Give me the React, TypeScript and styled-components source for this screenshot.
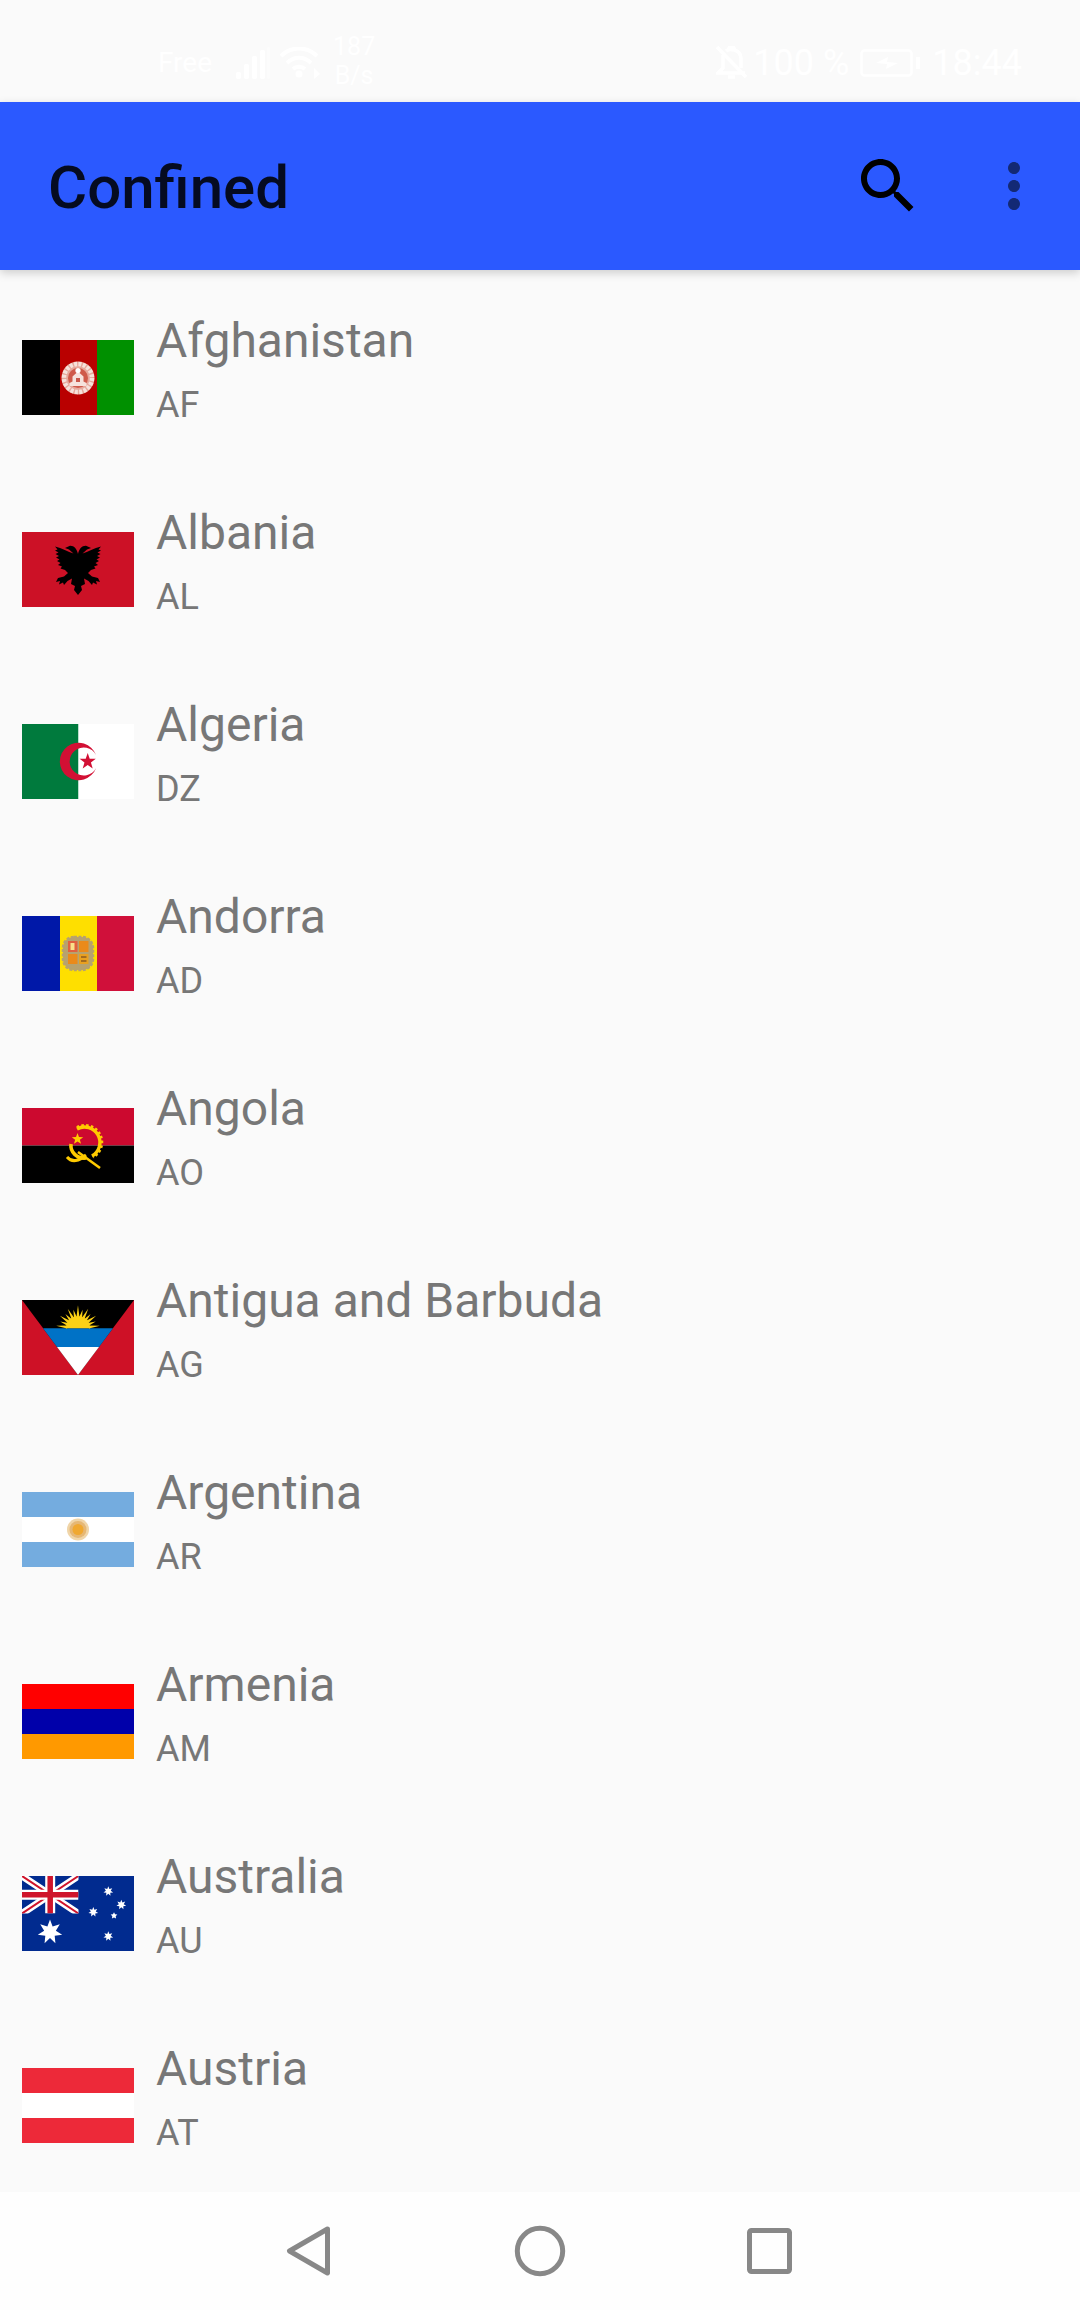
import * as React from "react";
import styled, { createGlobalStyle } from "styled-components";

const GlobalStyle = createGlobalStyle`
  html, body {
    margin: 0;
    padding: 0;
    background: #fafafa;
    font-family: Roboto, "Liberation Sans", sans-serif;
  }
`;

const Screen = styled.div`
  display: flex;
  flex-direction: column;
  width: 1080px;
  height: 2310px;
  overflow: hidden;
  background: #fafafa;
`;

const StatusBar = styled.div`
  display: flex;
  justify-content: space-between;
  align-items: center;
  height: 102px;
  box-sizing: border-box;
  padding: 24px 58px 0 158px;
  color: #fff;
  flex-shrink: 0;
`;

const StatusGroup = styled.div`
  display: flex;
  align-items: center;
`;

const Carrier = styled.span`
  font-size: 28px;
  line-height: 32px;
  margin-right: 24px;
`;

const NetSpeed = styled.div`
  display: flex;
  flex-direction: column;
  align-items: center;
  margin-left: 13px;
  font-size: 25px;
  line-height: 29px;
  margin-top: -4px;
`;

const StatusText = styled.span`
  font-size: 36px;
  line-height: 42px;
  white-space: pre;
`;

const StatusIcon = styled.svg<{ $left?: number; $right?: number }>`
  display: block;
  flex-shrink: 0;
  margin-left: ${props => props.$left || 0}px;
  margin-right: ${props => props.$right || 0}px;
`;

const AppBar = styled.header`
  position: relative;
  display: flex;
  align-items: center;
  height: 168px;
  flex-shrink: 0;
  padding: 0 12px 0 48px;
  background: #2b59ff;
  box-shadow: 0 3px 9px rgba(0, 0, 0, 0.18);
`;

const Title = styled.h1`
  flex: 1;
  margin: 2px 0 0;
  font-size: 60px;
  font-weight: 500;
  color: rgba(0, 0, 0, 0.87);
`;

const ActionIcon = styled.svg<{ $faded?: boolean }>`
  display: block;
  width: 72px;
  height: 72px;
  fill: ${props => (props.$faded ? "rgba(0, 0, 0, 0.54)" : "#000")};
`;

const SearchButton = styled.div`
  padding: 36px;
`;

const MenuButton = styled.div`
  padding: 36px 18px;
`;

const CountryList = styled.ul`
  flex: 1;
  min-height: 0;
  overflow: hidden;
  list-style: none;
  margin: 0;
  padding: 12px 0 0;
`;

const CountryRow = styled.li`
  display: flex;
  align-items: flex-start;
  height: 192px;
  box-sizing: border-box;
  padding: 31px 0 0 22px;
`;

const FlagImage = styled.svg`
  display: block;
  width: 112px;
  height: 75px;
  margin-top: 27px;
  margin-right: 22px;
  flex-shrink: 0;
`;

const CountryName = styled.div`
  font-size: 48px;
  line-height: 56px;
  color: #777;
`;

const CountryCode = styled.div`
  margin-top: 15px;
  font-size: 36px;
  line-height: 42px;
  color: #777;
`;

const NavBar = styled.nav`
  display: flex;
  justify-content: center;
  align-items: center;
  gap: 170px;
  height: 118px;
  flex-shrink: 0;
  background: #fefefe;
`;

const NavIcon = styled.svg`
  display: block;
  width: 60px;
  height: 60px;
  fill: none;
  stroke: #888;
  stroke-width: 5;
  stroke-linejoin: round;
`;

function starPoints(cx: number, cy: number, outer: number, inner: number, n: number) {
  const pts: string[] = [];
  for (let i = 0; i < n * 2; i++) {
    const r = i % 2 === 0 ? outer : inner;
    const a = (Math.PI * i) / n - Math.PI / 2;
    pts.push(`${(cx + r * Math.cos(a)).toFixed(2)},${(cy + r * Math.sin(a)).toFixed(2)}`);
  }
  return pts.join(" ");
}

const Afghanistan = () => (
  <>
    <rect width="38" height="75" fill="#000" />
    <rect x="38" width="37" height="75" fill="#b90000" />
    <rect x="75" width="37" height="75" fill="#009000" />
    <circle cx="56" cy="38" r="16.5" fill="#e6a89c" />
    <circle cx="56" cy="38" r="14" fill="none" stroke="#f6e2dc" strokeWidth="4.5" strokeDasharray="3 1.4" />
    <circle cx="56" cy="38" r="10" fill="#cf5a4a" />
    <path d="M47.5 46h17v-3l-3-1.5v-5l-5.5-5-5.5 5v5l-3 1.5z" fill="#f6e2dc" />
    <circle cx="56" cy="30.5" r="2.6" fill="#fff" />
    <rect x="54" y="38" width="4" height="4" fill="#c9574a" />
  </>
);

const EAGLE =
  "M56 22C57 17 60 13.5 64 13.7L69 16 65 17.5 60.5 21.5C66 20 72 16 79 14.5L76.5 17.5 79 18.5 75.5 20.5 78.5 22 75 24 78 25.5 74.5 27.5 77 29 73.5 31 76 33 72 34.5 73.5 36.5 69 38 66 41 70 44.5 76 46 78 50 74 49 75 52.5 71 50.5 70 53 66.5 49 62 46.5 63 52 59 54 60 58 56 63Z";

const Albania = () => (
  <>
    <rect width="112" height="75" fill="#cc1126" />
    <path d={EAGLE} fill="#000" />
    <path d={EAGLE} fill="#000" transform="translate(112 0) scale(-1 1)" />
  </>
);

const Algeria = () => (
  <>
    <rect width="56.5" height="75" fill="#007a3d" />
    <rect x="56.5" width="55.5" height="75" fill="#fff" />
    <path d="M74.1 31.1A18.7 18.7 0 1 0 74.1 43.9A14 14 0 1 1 74.1 31.1Z" fill="#d21034" />
    <polygon points={starPoints(65.7, 37.5, 8.5, 3.4, 5)} fill="#d21034" />
  </>
);

const Andorra = () => (
  <>
    <rect width="38" height="75" fill="#0018a8" />
    <rect x="38" width="37" height="75" fill="#fedf00" />
    <rect x="75" width="37" height="75" fill="#d0103a" />
    <rect x="41" y="21" width="30" height="33" rx="11" fill="#b7a26e" stroke="#b7a26e" strokeWidth="2.5" strokeDasharray="3 1.5" />
    <rect x="46" y="25" width="9.5" height="11" fill="#e0603f" />
    <rect x="48.5" y="27" width="4" height="7" fill="#fbe08a" />
    <rect x="57" y="25" width="9.5" height="11" fill="#ea8a1a" />
    <rect x="46" y="38" width="9.5" height="10" fill="#ea8a1a" />
    <rect x="57" y="38" width="9.5" height="10" fill="#e8a020" />
    <path d="M59 41h5.5M59 45h5.5" stroke="#8a5a20" strokeWidth="1.5" />
  </>
);

const Angola = () => (
  <>
    <rect width="112" height="37.5" fill="#cc092f" />
    <rect y="37.5" width="112" height="37.5" fill="#000" />
    <path d="M55 21A15 15 0 0 1 70 48" fill="none" stroke="#ffcb00" strokeWidth="3.4" />
    <path d="M55 19.5A16.5 16.5 0 0 1 71 49" fill="none" stroke="#ffcb00" strokeWidth="3" strokeDasharray="2.5 2.2" />
    <polygon points={starPoints(55.5, 31, 6, 2.5, 5)} fill="#ffcb00" />
    <path d="M49 36C48 44 55 51 64 50" fill="none" stroke="#ffcb00" strokeWidth="3.6" />
    <path d="M56 44L78 60" fill="none" stroke="#ffcb00" strokeWidth="2.6" />
    <path d="M45 49C50 55 57 53 64 47" fill="none" stroke="#ffcb00" strokeWidth="3" />
  </>
);

const Antigua = () => (
  <>
    <rect width="112" height="75" fill="#ce1126" />
    <polygon points="0,0 112,0 56,75" fill="#000" />
    <polygon points="21,28.3 91,28.3 77,47 35,47" fill="#0072c6" />
    <polygon points="35,47 77,47 56,75" fill="#fff" />
    {Array.from({ length: 13 }, (_, i) => {
      const a = (Math.PI * (i + 0.5)) / 13;
      const len = i === 6 ? 23 : i % 2 === 0 ? 22 : 19;
      const x = 56 - Math.cos(a) * len;
      const y = 28.3 - Math.sin(a) * len;
      const s = 0.14;
      const x1 = 56 - Math.cos(a - s) * 11;
      const y1 = 28.3 - Math.sin(a - s) * 11;
      const x2 = 56 - Math.cos(a + s) * 11;
      const y2 = 28.3 - Math.sin(a + s) * 11;
      return <polygon key={i} points={`${x},${y} ${x1},${y1} ${x2},${y2}`} fill="#fcd116" />;
    })}
    <path d="M44 28.3A12 12 0 0 1 68 28.3Z" fill="#fcd116" />
  </>
);

const Argentina = () => (
  <>
    <rect width="112" height="75" fill="#74acdf" />
    <rect y="25" width="112" height="25" fill="#fff" />
    <circle cx="56" cy="37.5" r="11" fill="#f0d5a8" />
    <circle cx="56" cy="37.5" r="8.5" fill="#e6b774" />
    <circle cx="56" cy="37.5" r="5.5" fill="#f0a830" />
  </>
);

const Armenia = () => (
  <>
    <rect width="112" height="25" fill="#f00" />
    <rect y="25" width="112" height="25" fill="#00a" />
    <rect y="50" width="112" height="25" fill="#f90" />
  </>
);

const Australia = () => (
  <>
    <rect width="112" height="75" fill="#012b8f" />
    <svg width="56.5" height="37.5" viewBox="0 0 56.5 37.5">
      <path d="M0 0L56.5 37.5M56.5 0L0 37.5" stroke="#fff" strokeWidth="7" />
      <path d="M0 0L56.5 37.5M56.5 0L0 37.5" stroke="#cf142b" strokeWidth="2" />
      <path d="M28.2 0V37.5M0 18.7H56.5" stroke="#fff" strokeWidth="10" />
      <path d="M28.2 0V37.5M0 18.7H56.5" stroke="#cf142b" strokeWidth="5.5" />
    </svg>
    <polygon points={starPoints(28, 56, 12.5, 6, 7)} fill="#fff" />
    <polygon points={starPoints(86.3, 15.3, 5, 2.5, 7)} fill="#fff" />
    <polygon points={starPoints(99.3, 28.7, 5, 2.5, 7)} fill="#fff" />
    <polygon points={starPoints(71.3, 36, 5, 2.5, 7)} fill="#fff" />
    <polygon points={starPoints(92, 39.7, 3.5, 1.8, 5)} fill="#fff" />
    <polygon points={starPoints(86.3, 60.3, 5, 2.5, 7)} fill="#fff" />
  </>
);

const Austria = () => (
  <>
    <rect width="112" height="25" fill="#ed2939" />
    <rect y="25" width="112" height="25" fill="#fff" />
    <rect y="50" width="112" height="25" fill="#ed2939" />
  </>
);

const COUNTRIES = [
  { name: "Afghanistan", code: "AF", Flag: Afghanistan },
  { name: "Albania", code: "AL", Flag: Albania },
  { name: "Algeria", code: "DZ", Flag: Algeria },
  { name: "Andorra", code: "AD", Flag: Andorra },
  { name: "Angola", code: "AO", Flag: Angola },
  { name: "Antigua and Barbuda", code: "AG", Flag: Antigua },
  { name: "Argentina", code: "AR", Flag: Argentina },
  { name: "Armenia", code: "AM", Flag: Armenia },
  { name: "Australia", code: "AU", Flag: Australia },
  { name: "Austria", code: "AT", Flag: Austria }
];

const App = () => (
  <Screen>
    <GlobalStyle />
    <StatusBar>
      <StatusGroup>
        <Carrier>Free</Carrier>
        <StatusIcon width="34" height="32" viewBox="0 0 34 32" fill="#fff">
          <rect x="0" y="25" width="5" height="7" rx="2" />
          <rect x="8" y="17" width="5" height="15" rx="2" />
          <rect x="16" y="9" width="5" height="23" rx="2" />
          <rect x="24" y="3" width="5" height="29" rx="2" />
          <rect x="31" y="0" width="3" height="32" rx="1" opacity="0.4" />
        </StatusIcon>
        <StatusIcon $left={10} width="40" height="32" viewBox="0 0 40 32" fill="none" stroke="#fff" strokeWidth="4">
          <path d="M1 9C11-1 27-1 37 9" />
          <path d="M7 16C14 9 24 9 31 16" />
          <path d="M13 22C16 19 22 19 25 22" />
          <circle cx="19" cy="27" r="3.5" fill="#fff" stroke="none" />
          <path d="M34 21L40 27 34 32Z" fill="#fff" stroke="none" />
        </StatusIcon>
        <NetSpeed>
          <span>187</span>
          <span>B/s</span>
        </NetSpeed>
      </StatusGroup>
      <StatusGroup>
        <StatusIcon $right={6} width="31" height="34" viewBox="0 0 31 34" fill="none" stroke="#fff" strokeWidth="3.5">
          <path d="M7 9V22L2 27H29" />
          <path d="M10 5C14 2 24 3 25 12V22" />
          <path d="M1 1L30 31" />
          <path d="M13 3C13 0 18 0 18 3" />
          <path d="M12 31H19" />
        </StatusIcon>
        <StatusText>100 %</StatusText>
        <StatusIcon $left={11} $right={12} width="60" height="28" viewBox="0 0 60 28" fill="none" stroke="#fff" strokeWidth="2.5">
          <rect x="1.5" y="1.5" width="50" height="25" rx="3" />
          <path d="M16 14L28 8 27 13 38 14 26 20 27 15Z" fill="#fff" stroke="none" />
          <rect x="56" y="8" width="4" height="12" fill="#fff" stroke="none" />
        </StatusIcon>
        <StatusText>18:44</StatusText>
      </StatusGroup>
    </StatusBar>
    <AppBar>
      <Title>Confined</Title>
      <SearchButton>
        <ActionIcon viewBox="0 0 24 24">
          <path d="M15.5 14h-.79l-.28-.27C15.41 12.59 16 11.11 16 9.5 16 5.91 13.09 3 9.5 3S3 5.91 3 9.5 5.91 16 9.5 16c1.61 0 3.09-.59 4.23-1.57l.27.28v.79l5 4.99L20.49 19l-4.99-5zm-6 0C7.01 14 5 11.99 5 9.5S7.01 5 9.5 5 14 7.01 14 9.5 11.99 14 9.5 14z" />
        </ActionIcon>
      </SearchButton>
      <MenuButton>
        <ActionIcon $faded viewBox="0 0 24 24">
          <path d="M12 8c1.1 0 2-.9 2-2s-.9-2-2-2-2 .9-2 2 .9 2 2 2zm0 2c-1.1 0-2 .9-2 2s.9 2 2 2 2-.9 2-2-.9-2-2-2zm0 6c-1.1 0-2 .9-2 2s.9 2 2 2 2-.9 2-2-.9-2-2-2z" />
        </ActionIcon>
      </MenuButton>
    </AppBar>
    <CountryList>
      {COUNTRIES.map(({ name, code, Flag }) => (
        <CountryRow key={code}>
          <FlagImage viewBox="0 0 112 75">
            <Flag />
          </FlagImage>
          <div>
            <CountryName>{name}</CountryName>
            <CountryCode>{code}</CountryCode>
          </div>
        </CountryRow>
      ))}
    </CountryList>
    <NavBar>
      <NavIcon viewBox="0 0 60 60">
        <path d="M47.5 8L9.5 30L47.5 52Z" />
      </NavIcon>
      <NavIcon viewBox="0 0 60 60">
        <circle cx="30" cy="30" r="22.7" />
      </NavIcon>
      <NavIcon viewBox="0 0 60 60">
        <rect x="9.5" y="9.5" width="40" height="41" rx="2" />
      </NavIcon>
    </NavBar>
  </Screen>
);

export default App;
